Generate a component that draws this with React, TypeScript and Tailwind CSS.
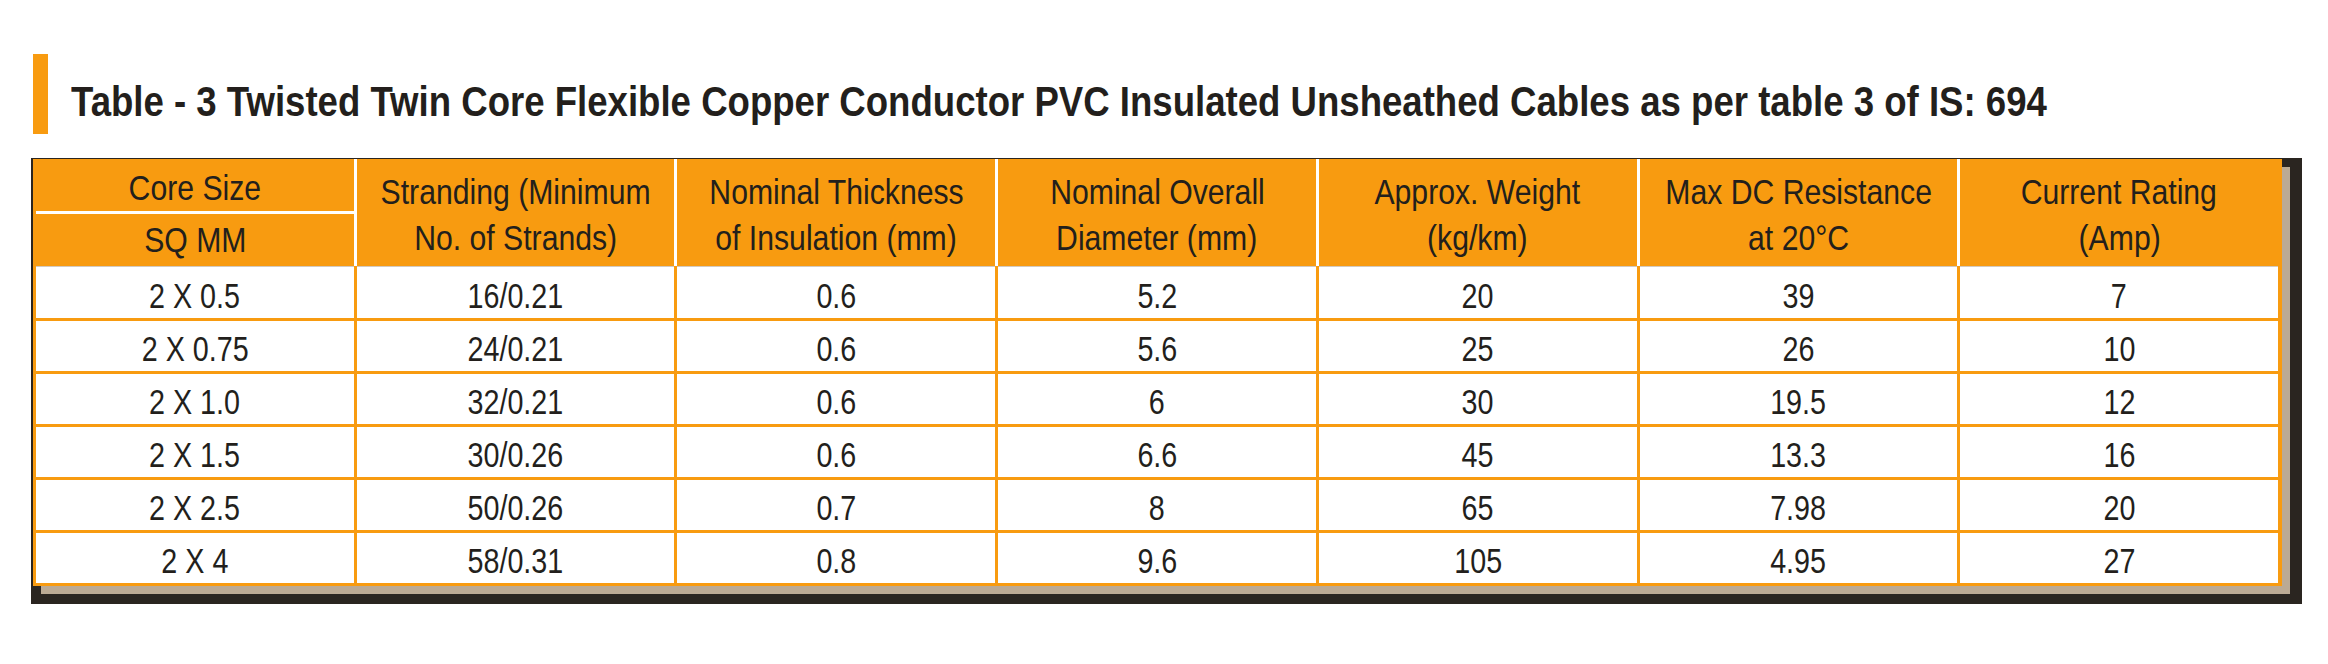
import React from "react";

const headers: { lines: string[] }[] = [
  { lines: ["Stranding (Minimum", "No. of Strands)"] },
  { lines: ["Nominal Thickness", "of Insulation (mm)"] },
  { lines: ["Nominal Overall", "Diameter (mm)"] },
  { lines: ["Approx. Weight", "(kg/km)"] },
  { lines: ["Max DC Resistance", "at 20°C"] },
  { lines: ["Current Rating", "(Amp)"] },
];

const rows: string[][] = [
  ["2 X 0.5", "16/0.21", "0.6", "5.2", "20", "39", "7"],
  ["2 X 0.75", "24/0.21", "0.6", "5.6", "25", "26", "10"],
  ["2 X 1.0", "32/0.21", "0.6", "6", "30", "19.5", "12"],
  ["2 X 1.5", "30/0.26", "0.6", "6.6", "45", "13.3", "16"],
  ["2 X 2.5", "50/0.26", "0.7", "8", "65", "7.98", "20"],
  ["2 X 4", "58/0.31", "0.8", "9.6", "105", "4.95", "27"],
];

function H({ children }: { children: React.ReactNode }) {
  return <span className="inline-block scale-x-[0.862] whitespace-nowrap">{children}</span>;
}

export default function App() {
  return (
    <div className="w-[2328px] h-[664px] overflow-hidden bg-white pt-[54px] pl-[31px] text-[#231f1c] font-['Liberation_Sans',Arial,sans-serif]">
      <div className="flex items-start">
        <div className="shrink-0 ml-[2px] w-[15px] h-[80px] bg-[#f89b10]" />
        <h1 className="shrink-0 ml-[23px] mt-[27px] text-[42px] leading-[42px] font-bold whitespace-nowrap">
          <span className="inline-block origin-left scale-x-[0.871]">
            Table - 3 Twisted Twin Core Flexible Copper Conductor PVC Insulated Unsheathed Cables as per table 3 of IS: 694
          </span>
        </h1>
      </div>

      <div className="mt-[24px] w-fit bg-[#2a2520] pl-[2px] pt-px pr-[20px] pb-[18px]">
        <div className="w-[2249px] bg-[#f89b10] pl-[3px] pr-[4px] pb-[3px] shadow-[8px_8px_0_0_#bbaa94]">
          {/* header */}
          <div className="grid grid-cols-7 gap-x-[3px] h-[107px] bg-white">
            <div className="flex flex-col gap-[3px] bg-white">
              <div className="h-[52px] bg-[#f89b10] flex items-center justify-center pt-[6px] text-[35px] leading-[46px]">
                <H>Core Size</H>
              </div>
              <div className="h-[52px] bg-[#f89b10] flex items-center justify-center text-[35px] leading-[46px]">
                <H>SQ MM</H>
              </div>
            </div>
            {headers.map((h) => (
              <div
                key={h.lines[0]}
                className="bg-[#f89b10] flex flex-col items-center justify-center pt-[5px] text-[35px] leading-[46px]"
              >
                {h.lines.map((l) => (
                  <H key={l}>{l}</H>
                ))}
              </div>
            ))}
          </div>

          {/* body */}
          <div className="grid grid-cols-7 gap-[3px] grid-rows-[52px_repeat(5,50px)]">
            {rows.map((r, ri) =>
              r.map((c, ci) => (
                <div
                  key={`${ri}-${ci}`}
                  className={`bg-white flex items-center justify-center pt-[5px] text-[35px] leading-none ${
                    ri === 0 ? "border-t border-[#d2cac0]" : ""
                  }`}
                >
                  <span className="inline-block scale-x-[0.82] whitespace-nowrap">{c}</span>
                </div>
              ))
            )}
          </div>
        </div>
      </div>
    </div>
  );
}
